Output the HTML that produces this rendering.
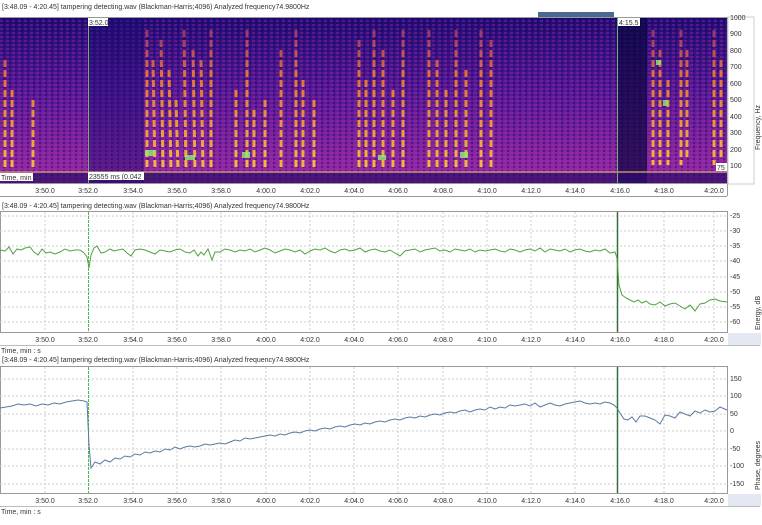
<!DOCTYPE html><html><head><style>
body{margin:0;background:#fff;width:762px;height:520px;overflow:hidden;font-family:"Liberation Sans",sans-serif}
svg text{font-family:"Liberation Sans",sans-serif;font-size:7px;fill:#333}
</style></head><body>
<svg width="762" height="520" xmlns="http://www.w3.org/2000/svg">
<defs>
<linearGradient id="bg" x1="0" y1="0" x2="0" y2="1">
<stop offset="0" stop-color="#200c78"/><stop offset="0.45" stop-color="#55189a"/><stop offset="1" stop-color="#9a2aa8"/></linearGradient>
<linearGradient id="st" gradientUnits="userSpaceOnUse" x1="0" y1="20" x2="0" y2="170">
<stop offset="0" stop-color="#d04070" stop-opacity="0.6"/><stop offset="0.35" stop-color="#f07a30"/><stop offset="1" stop-color="#ffcc30"/></linearGradient>
<pattern id="dots" width="6" height="4" patternUnits="userSpaceOnUse"><rect width="3" height="2" fill="#b03090" opacity="0.35"/><rect x="3" y="2" width="2" height="2" fill="#100540" opacity="0.4"/></pattern>
</defs>
<!-- panel 1 -->
<text x="2" y="9">[3:48.09 - 4:20.45] tampering detecting.wav (Blackman-Harris;4096)     Analyzed frequency74.9800Hz</text>
<rect x="538" y="12" width="76" height="5" fill="#4a6a90"/>
<line x1="0" y1="17.5" x2="727" y2="17.5" stroke="#999"/>
<rect x="0" y="18" width="727" height="165" fill="url(#bg)"/>
<rect x="0" y="18" width="727" height="165" fill="url(#dots)"/>
<rect x="88" y="18" width="56" height="165" fill="#1a0a70" opacity="0.45"/>
<rect x="617" y="18" width="30" height="165" fill="#0c0540" opacity="0.7"/>
<g stroke="url(#st)" stroke-width="3" stroke-dasharray="7,3" opacity="0.9">
<line x1="5" y1="60" x2="5" y2="170"/><line x1="12" y1="90" x2="12" y2="170"/><line x1="33" y1="100" x2="33" y2="170"/>
<line x1="147" y1="30" x2="147" y2="170"/><line x1="153" y1="60" x2="155" y2="170"/><line x1="161" y1="40" x2="163" y2="170"/><line x1="169" y1="70" x2="171" y2="170"/><line x1="176" y1="100" x2="178" y2="170"/><line x1="184" y1="30" x2="186" y2="170"/><line x1="193" y1="50" x2="195" y2="170"/><line x1="201" y1="60" x2="203" y2="170"/><line x1="211" y1="30" x2="211" y2="170"/>
<line x1="236" y1="90" x2="236" y2="170"/><line x1="247" y1="30" x2="247" y2="170"/><line x1="254" y1="110" x2="254" y2="170"/><line x1="265" y1="100" x2="265" y2="170"/><line x1="281" y1="50" x2="281" y2="170"/><line x1="296" y1="30" x2="296" y2="170"/><line x1="303" y1="80" x2="303" y2="170"/><line x1="314" y1="100" x2="314" y2="170"/>
<line x1="359" y1="40" x2="359" y2="170"/><line x1="366" y1="80" x2="366" y2="170"/><line x1="374" y1="30" x2="374" y2="170"/><line x1="383" y1="50" x2="383" y2="170"/><line x1="393" y1="90" x2="393" y2="170"/><line x1="403" y1="30" x2="403" y2="170"/>
<line x1="429" y1="30" x2="429" y2="170"/><line x1="437" y1="60" x2="437" y2="170"/><line x1="446" y1="90" x2="446" y2="170"/><line x1="456" y1="30" x2="456" y2="170"/><line x1="466" y1="70" x2="466" y2="170"/><line x1="481" y1="30" x2="481" y2="170"/><line x1="491" y1="40" x2="491" y2="170"/>
<line x1="653" y1="30" x2="653" y2="165"/><line x1="660" y1="50" x2="660" y2="165"/><line x1="668" y1="80" x2="668" y2="165"/><line x1="681" y1="30" x2="681" y2="165"/><line x1="687" y1="50" x2="687" y2="160"/><line x1="714" y1="30" x2="714" y2="165"/><line x1="721" y1="60" x2="721" y2="160"/>
</g>
<g fill="#8ef070" opacity="0.8"><rect x="145" y="150" width="10" height="6"/><rect x="185" y="155" width="10" height="5"/><rect x="242" y="152" width="8" height="6"/><rect x="378" y="155" width="8" height="5"/><rect x="460" y="152" width="8" height="6"/><rect x="656" y="60" width="5" height="5"/><rect x="663" y="100" width="5" height="6"/></g>
<line x1="0" y1="172" x2="727" y2="172" stroke="#c09070" stroke-width="1.5"/>
<rect x="0" y="173" width="727" height="10" fill="#2a0c6a" opacity="0.7"/>
<line x1="88.5" y1="18" x2="88.5" y2="183" stroke="#70b070"/><line x1="617.5" y1="18" x2="617.5" y2="183" stroke="#70b070"/>
<rect x="88" y="18" width="20" height="8" fill="#fff"/><text x="89" y="25">3:52.0</text>
<rect x="618" y="18" width="22" height="8" fill="#fff"/><text x="619" y="25">4:15.5</text>
<rect x="88" y="172" width="56" height="8" fill="#fff"/><text x="89" y="179">23555 ms (0.042 Hz)</text>
<rect x="0" y="173" width="33" height="8" fill="#fff"/><text x="1" y="180">Time, min : s</text>
<rect x="716" y="163" width="11" height="8" fill="#fff"/><text x="717" y="170">75</text>
<line x1="0" y1="183.5" x2="727" y2="183.5" stroke="#999"/>
<line x1="727.5" y1="17" x2="727.5" y2="196" stroke="#999"/>
<rect x="728" y="17" width="26" height="167" fill="#fff" stroke="#ccc"/>
<g text-anchor="start"><text x="730" y="20">1000</text><text x="730" y="36">900</text><text x="730" y="53">800</text><text x="730" y="69">700</text><text x="730" y="86">600</text><text x="730" y="102">500</text><text x="730" y="119">400</text><text x="730" y="135">300</text><text x="730" y="152">200</text><text x="730" y="168">100</text></g>
<text transform="translate(760,150) rotate(-90)">Frequency, Hz</text>
<line x1="0" y1="196.5" x2="727" y2="196.5" stroke="#999"/>
<g text-anchor="middle"><text x="45" y="193">3:50.0</text><text x="88" y="193">3:52.0</text><text x="133" y="193">3:54.0</text><text x="177" y="193">3:56.0</text><text x="221" y="193">3:58.0</text><text x="266" y="193">4:00.0</text><text x="310" y="193">4:02.0</text><text x="354" y="193">4:04.0</text><text x="398" y="193">4:06.0</text><text x="443" y="193">4:08.0</text><text x="487" y="193">4:10.0</text><text x="531" y="193">4:12.0</text><text x="575" y="193">4:14.0</text><text x="620" y="193">4:16.0</text><text x="664" y="193">4:18.0</text><text x="714" y="193">4:20.0</text></g>

<!-- panel 2 -->
<text x="2" y="208">[3:48.09 - 4:20.45] tampering detecting.wav (Blackman-Harris;4096)     Analyzed frequency74.9800Hz</text>
<rect x="0.5" y="211.5" width="727" height="121" fill="#fff" stroke="#999"/>
<g stroke="#ccc" stroke-dasharray="2,2"><line x1="0" y1="216" x2="727" y2="216"/><line x1="0" y1="231" x2="727" y2="231"/><line x1="0" y1="246" x2="727" y2="246"/><line x1="0" y1="261" x2="727" y2="261"/><line x1="0" y1="277" x2="727" y2="277"/><line x1="0" y1="292" x2="727" y2="292"/><line x1="0" y1="307" x2="727" y2="307"/><line x1="0" y1="322" x2="727" y2="322"/>
<line x1="45" y1="212" x2="45" y2="332"/><line x1="133" y1="212" x2="133" y2="332"/><line x1="177" y1="212" x2="177" y2="332"/><line x1="221" y1="212" x2="221" y2="332"/><line x1="266" y1="212" x2="266" y2="332"/><line x1="310" y1="212" x2="310" y2="332"/><line x1="354" y1="212" x2="354" y2="332"/><line x1="398" y1="212" x2="398" y2="332"/><line x1="443" y1="212" x2="443" y2="332"/><line x1="487" y1="212" x2="487" y2="332"/><line x1="531" y1="212" x2="531" y2="332"/><line x1="575" y1="212" x2="575" y2="332"/><line x1="664" y1="212" x2="664" y2="332"/><line x1="714" y1="212" x2="714" y2="332"/></g>
<line x1="88.5" y1="212" x2="88.5" y2="332" stroke="#40c040" stroke-dasharray="3,1"/>
<line x1="617.5" y1="212" x2="617.5" y2="332" stroke="#307030" stroke-width="1.5"/>
<polyline fill="none" stroke="#50a040" stroke-width="1" points="0,250 5,251 9,247 13,254 17,249 21,250 25,248 30,247 34,252 38,255 42,249 46,253 50,252 55,254 60,252 65,249 70,251 75,250 80,250 84,253 87,257 89,268 91,255 94,248 97,246 101,253 105,252 110,249 114,251 118,250 123,249 127,253 131,256 135,250 140,249 145,250 150,252 155,254 160,250 165,251 170,252 175,250 180,249 185,252 190,253 194,250 198,256 201,252 204,255 208,249 212,260 215,252 220,252 225,249 230,250 235,252 240,250 245,251 250,249 255,252 260,250 265,248 270,250 275,253 280,251 285,249 290,250 295,252 300,250 305,254 310,251 315,249 320,250 325,248 330,251 335,253 340,250 345,249 350,251 355,250 360,248 365,252 370,250 375,249 380,251 385,252 390,250 395,253 400,256 405,251 410,250 415,249 420,252 425,250 430,249 435,248 440,251 445,250 450,252 455,249 460,250 465,251 470,249 475,252 480,250 485,251 490,250 495,249 500,251 505,252 510,249 515,250 520,252 525,250 530,249 535,251 540,248 545,252 550,249 555,250 560,251 565,249 570,252 575,250 580,249 585,251 590,252 595,250 600,251 605,249 610,253 615,252 617,258 619,285 622,295 626,298 630,300 634,302 638,300 642,303 646,301 650,304 655,305 660,302 665,306 670,304 675,303 680,306 685,309 690,305 695,311 700,304 705,303 710,300 715,299 720,301 727,302"/>
<g><text x="730" y="218">-25</text><text x="730" y="233">-30</text><text x="730" y="248">-35</text><text x="730" y="263">-40</text><text x="730" y="279">-45</text><text x="730" y="294">-50</text><text x="730" y="309">-55</text><text x="730" y="324">-60</text></g>
<text transform="translate(760,330) rotate(-90)">Energy, dB</text>
<rect x="728" y="333" width="33" height="12" fill="#e4e8f2"/>
<line x1="0" y1="345.5" x2="760" y2="345.5" stroke="#bbb"/>
<g text-anchor="middle"><text x="45" y="342">3:50.0</text><text x="88" y="342">3:52.0</text><text x="133" y="342">3:54.0</text><text x="177" y="342">3:56.0</text><text x="221" y="342">3:58.0</text><text x="266" y="342">4:00.0</text><text x="310" y="342">4:02.0</text><text x="354" y="342">4:04.0</text><text x="398" y="342">4:06.0</text><text x="443" y="342">4:08.0</text><text x="487" y="342">4:10.0</text><text x="531" y="342">4:12.0</text><text x="575" y="342">4:14.0</text><text x="620" y="342">4:16.0</text><text x="664" y="342">4:18.0</text><text x="714" y="342">4:20.0</text></g>
<text x="1" y="353">Time, min : s</text>

<!-- panel 3 -->
<text x="2" y="362">[3:48.09 - 4:20.45] tampering detecting.wav (Blackman-Harris;4096)     Analyzed frequency74.9800Hz</text>
<rect x="0.5" y="366.5" width="727" height="127" fill="#fff" stroke="#999"/>
<g stroke="#ccc" stroke-dasharray="2,2"><line x1="0" y1="379" x2="727" y2="379"/><line x1="0" y1="396" x2="727" y2="396"/><line x1="0" y1="414" x2="727" y2="414"/><line x1="0" y1="431" x2="727" y2="431"/><line x1="0" y1="449" x2="727" y2="449"/><line x1="0" y1="466" x2="727" y2="466"/><line x1="0" y1="484" x2="727" y2="484"/>
<line x1="45" y1="367" x2="45" y2="493"/><line x1="133" y1="367" x2="133" y2="493"/><line x1="177" y1="367" x2="177" y2="493"/><line x1="221" y1="367" x2="221" y2="493"/><line x1="266" y1="367" x2="266" y2="493"/><line x1="310" y1="367" x2="310" y2="493"/><line x1="354" y1="367" x2="354" y2="493"/><line x1="398" y1="367" x2="398" y2="493"/><line x1="443" y1="367" x2="443" y2="493"/><line x1="487" y1="367" x2="487" y2="493"/><line x1="531" y1="367" x2="531" y2="493"/><line x1="575" y1="367" x2="575" y2="493"/><line x1="664" y1="367" x2="664" y2="493"/><line x1="714" y1="367" x2="714" y2="493"/></g>
<line x1="88.5" y1="367" x2="88.5" y2="493" stroke="#40c040" stroke-dasharray="3,1"/>
<line x1="617.5" y1="367" x2="617.5" y2="493" stroke="#307030" stroke-width="1.5"/>
<polyline fill="none" stroke="#5a7aa0" stroke-width="1" points="0,408 6,407 12,406 18,404 24,405 30,404 36,406 42,404 48,405 54,403 60,404 66,402 72,401 78,400 84,401 87,402 89,445 91,468 95,462 100,464 105,460 110,462 115,458 120,459 125,456 130,457 135,454 140,455 145,452 150,453 155,451 160,452 165,449 170,450 175,447 180,449 185,447 190,446 195,447 200,446 205,444 210,445 215,444 220,443 225,444 230,442 235,440 240,441 245,438 250,439 255,438 260,437 265,436 270,435 275,436 280,434 285,435 290,433 295,432 300,433 305,431 310,430 315,431 320,429 325,428 330,429 335,427 340,426 345,427 350,425 355,424 360,425 365,423 370,424 375,422 380,421 385,422 390,420 395,419 400,420 405,418 410,417 415,418 420,416 425,417 430,415 435,414 440,415 445,413 450,412 455,413 460,411 465,410 470,412 475,410 480,409 485,410 490,407 495,409 500,407 505,408 510,405 515,406 520,405 525,404 530,406 535,403 540,407 545,405 550,403 555,405 560,406 565,404 570,403 575,402 580,401 585,403 590,404 595,403 600,404 605,402 610,403 614,405 617,408 620,413 624,419 628,420 632,417 636,422 640,416 645,416 650,418 655,420 660,424 665,415 670,416 675,418 680,412 685,414 690,416 695,411 700,413 705,410 710,412 715,411 720,407 727,410"/>
<g><text x="730" y="381">150</text><text x="730" y="398">100</text><text x="730" y="416">50</text><text x="730" y="433">0</text><text x="730" y="451">-50</text><text x="730" y="468">-100</text><text x="730" y="486">-150</text></g>
<text transform="translate(760,490) rotate(-90)">Phase, degrees</text>
<rect x="728" y="494" width="33" height="12" fill="#e4e8f2"/>
<line x1="0" y1="506.5" x2="760" y2="506.5" stroke="#bbb"/>
<g text-anchor="middle"><text x="45" y="503">3:50.0</text><text x="88" y="503">3:52.0</text><text x="133" y="503">3:54.0</text><text x="177" y="503">3:56.0</text><text x="221" y="503">3:58.0</text><text x="266" y="503">4:00.0</text><text x="310" y="503">4:02.0</text><text x="354" y="503">4:04.0</text><text x="398" y="503">4:06.0</text><text x="443" y="503">4:08.0</text><text x="487" y="503">4:10.0</text><text x="531" y="503">4:12.0</text><text x="575" y="503">4:14.0</text><text x="620" y="503">4:16.0</text><text x="664" y="503">4:18.0</text><text x="714" y="503">4:20.0</text></g>
<text x="1" y="514">Time, min : s</text>
</svg>
</body></html>
